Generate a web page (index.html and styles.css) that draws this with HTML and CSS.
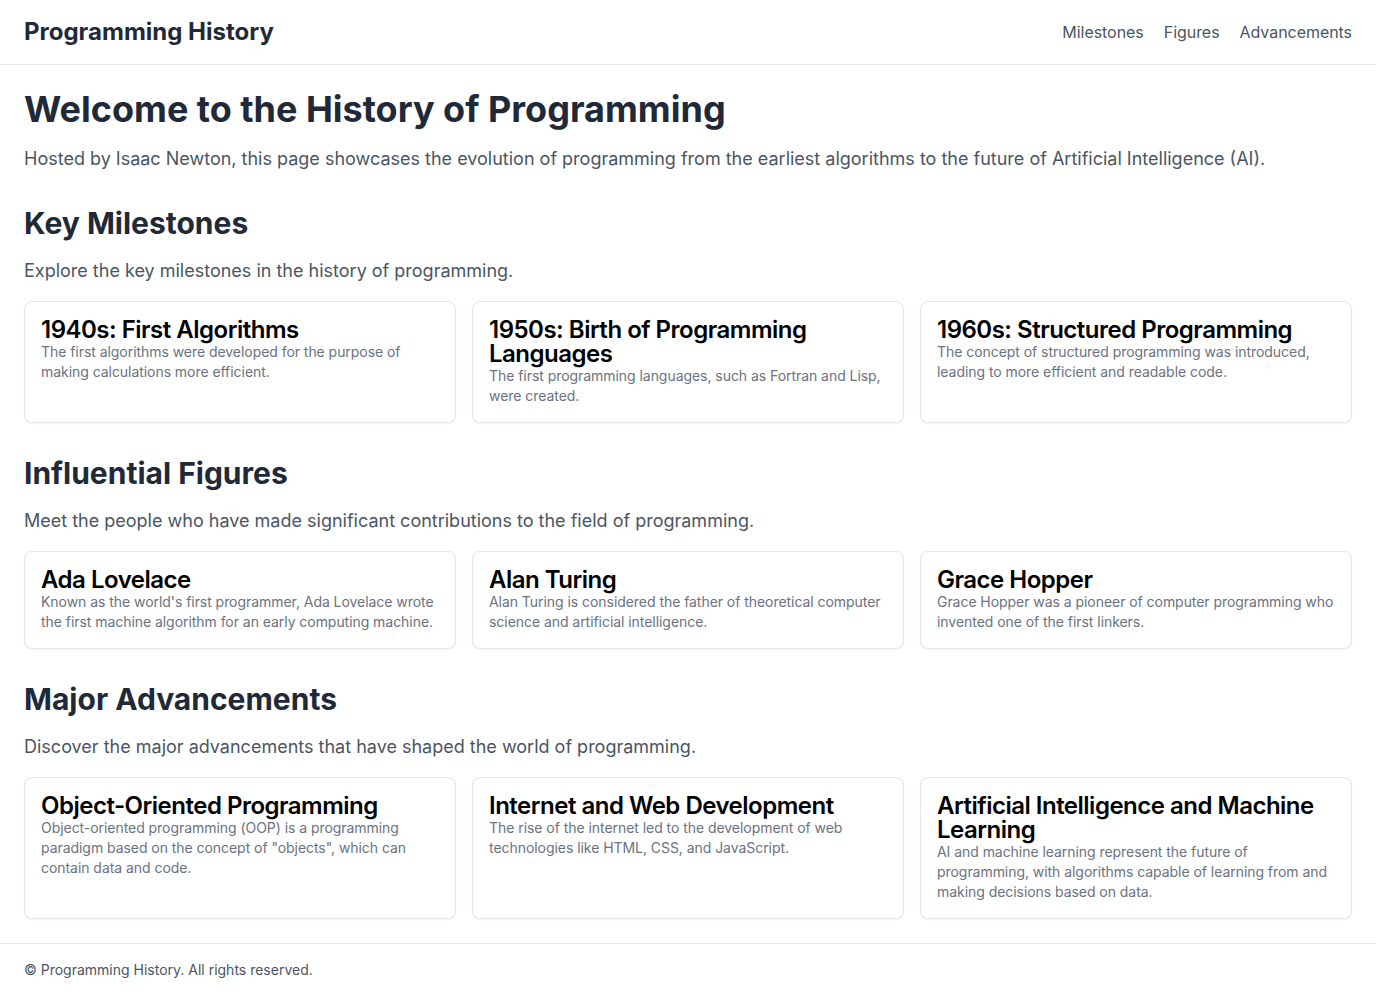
FILE: index.html
```html
<!DOCTYPE html>
<html lang="en">
<head>
<meta charset="utf-8">
<title>Programming History</title>
<link rel="stylesheet" href="styles.css">
</head>
<body>
<header class="site-header">
  <div class="brand">Programming History</div>
  <nav class="nav">
    <a href="#milestones">Milestones</a>
    <a href="#figures">Figures</a>
    <a href="#advancements">Advancements</a>
  </nav>
</header>
<main class="main">
  <h1 class="title">Welcome to the History of Programming</h1>
  <p class="lead">Hosted by Isaac Newton, this page showcases the evolution of programming from the earliest algorithms to the future of Artificial Intelligence (AI).</p>

  <section class="section" id="milestones">
    <h2 class="section-title">Key Milestones</h2>
    <p class="lead">Explore the key milestones in the history of programming.</p>
    <div class="grid">
      <div class="card"><h3 class="card-title">1940s: First Algorithms</h3><p class="card-text">The first algorithms were developed for the purpose of making calculations more efficient.</p></div>
      <div class="card"><h3 class="card-title">1950s: Birth of Programming Languages</h3><p class="card-text">The first programming languages, such as Fortran and Lisp, were created.</p></div>
      <div class="card"><h3 class="card-title">1960s: Structured Programming</h3><p class="card-text">The concept of structured programming was introduced, leading to more efficient and readable code.</p></div>
    </div>
  </section>

  <section class="section" id="figures">
    <h2 class="section-title">Influential Figures</h2>
    <p class="lead">Meet the people who have made significant contributions to the field of programming.</p>
    <div class="grid">
      <div class="card"><h3 class="card-title">Ada Lovelace</h3><p class="card-text">Known as the world's first programmer, Ada Lovelace wrote the first machine algorithm for an early computing machine.</p></div>
      <div class="card"><h3 class="card-title">Alan Turing</h3><p class="card-text">Alan Turing is considered the father of theoretical computer science and artificial intelligence.</p></div>
      <div class="card"><h3 class="card-title">Grace Hopper</h3><p class="card-text">Grace Hopper was a pioneer of computer programming who invented one of the first linkers.</p></div>
    </div>
  </section>

  <section class="section" id="advancements">
    <h2 class="section-title">Major Advancements</h2>
    <p class="lead">Discover the major advancements that have shaped the world of programming.</p>
    <div class="grid">
      <div class="card"><h3 class="card-title">Object-Oriented Programming</h3><p class="card-text">Object-oriented programming (OOP) is a programming paradigm based on the concept of "objects", which can contain data and code.</p></div>
      <div class="card"><h3 class="card-title">Internet and Web Development</h3><p class="card-text">The rise of the internet led to the development of web technologies like HTML, CSS, and JavaScript.</p></div>
      <div class="card"><h3 class="card-title">Artificial Intelligence and Machine Learning</h3><p class="card-text">AI and machine learning represent the future of programming, with algorithms capable of learning from and making decisions based on data.</p></div>
    </div>
  </section>
</main>
<footer class="site-footer">
  <p>© Programming History. All rights reserved.</p>
</footer>
</body>
</html>
```

FILE: styles.css
```css
* { box-sizing: border-box; }
html, body { margin: 0; padding: 0; }
body {
  font-family: Inter, "Noto Sans", "Liberation Sans", sans-serif;
  color: #000;
  background: #fff;
}
h1, h2, h3, p { margin: 0; }

.site-header {
  display: flex;
  justify-content: space-between;
  align-items: center;
  padding: 16px 24px;
  border-bottom: 1px solid #e5e7eb;
}
.brand {
  font-size: 24px;
  line-height: 32px;
  font-weight: 700;
  color: #1f2937;
}
.nav { display: flex; gap: 20px; }
.nav a {
  font-size: 16px;
  line-height: 24px;
  color: #4b5563;
  text-decoration: none;
  letter-spacing: -0.05px;
}

.main { padding: 24px 24px 24px; }
.title {
  font-size: 36px;
  line-height: 40px;
  font-weight: 700;
  color: #1f2937;
  margin-bottom: 16px;
}
.lead {
  font-size: 18px;
  line-height: 28px;
  color: #4b5563;
}
.section { margin-top: 32px; }
.section-title {
  font-size: 30px;
  line-height: 36px;
  font-weight: 700;
  color: #1f2937;
  margin-bottom: 16px;
}
.section .lead { margin-bottom: 16px; }
.grid {
  display: grid;
  grid-template-columns: repeat(3, 1fr);
  gap: 16px;
}
.card {
  border: 1px solid #e5e7eb;
  border-radius: 8px;
  padding: 16px;
  background: #fff;
  box-shadow: 0 1px 2px rgba(0,0,0,0.05);
}
.card-title {
  font-size: 24px;
  line-height: 24px;
  font-weight: 600;
  color: #000;
  letter-spacing: -0.5px;
}
.card-text {
  font-size: 14px;
  line-height: 20px;
  color: #6b7280;
  letter-spacing: -0.05px;
}
.site-footer {
  border-top: 1px solid #e5e7eb;
  padding: 16px 24px;
}
.site-footer p {
  font-size: 14px;
  line-height: 20px;
  color: #4b5563;
}
```
